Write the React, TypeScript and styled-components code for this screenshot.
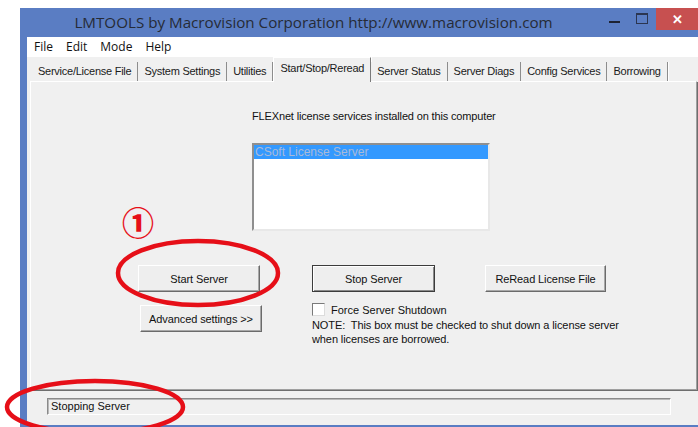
import styled, { createGlobalStyle } from "styled-components";

const GlobalStyle = createGlobalStyle`
    html, body {
        margin: 0;
        padding: 0;
        background: #ffffff;
    }
    body {
        font-family: "Liberation Sans", Arial, sans-serif;
        overflow: hidden;
    }
`

const Page = styled.div`
    position: relative;
    width: 698px;
    height: 427px;
    padding: 8px 0 0 20px;
    box-sizing: border-box;
    overflow: hidden;
`

const Window = styled.div`
    display: flex;
    flex-direction: column;
    width: 678px;
    height: 419px;
    background: #5a7dc3;
    padding: 0 0 2px 7px;
    box-sizing: border-box;
`

const TitleBar = styled.div`
    display: flex;
    align-items: flex-start;
    height: 29px;
    flex-shrink: 0;
`

const Title = styled.div`
    flex: 1;
    text-align: center;
    font-family: "Open Sans", "Noto Sans", sans-serif;
    font-size: 15.2px;
    line-height: 29px;
    color: #262b36;
`

const Controls = styled.div`
    display: flex;
    align-items: flex-start;
    width: 98px;
    height: 22px;
`

const CtrlButton = styled.div<{ close?: boolean }>`
    display: flex;
    align-items: center;
    justify-content: center;
    width: ${({ close }) => (close ? '42px' : '28px')};
    height: 22px;
    background: ${({ close }) => (close ? '#c75050' : 'transparent')};
    color: #ffffff;
    font-size: 13px;
    font-weight: bold;
`

const MinGlyph = styled.span`
    display: block;
    width: 11px;
    height: 2px;
    margin-top: 6px;
    background: #1d2333;
`

const MaxGlyph = styled.span`
    display: block;
    width: 10px;
    height: 8px;
    border: 1px solid #2b3550;
    border-top-width: 2px;
    margin-top: -2px;
`

const Client = styled.div`
    flex: 1;
    display: flex;
    flex-direction: column;
    background: #f0f0f0;
`

const MenuBar = styled.div`
    display: flex;
    gap: 13px;
    height: 20px;
    padding-left: 7px;
    background: #ffffff;
    font-family: "Open Sans", "Noto Sans", sans-serif;
    font-size: 12px;
    line-height: 20px;
    color: #111;
    flex-shrink: 0;
`

const TabStrip = styled.div`
    display: flex;
    align-items: flex-end;
    height: 21px;
    margin-top: 3px;
    padding-left: 5px;
    flex-shrink: 0;
    position: relative;
    z-index: 1;
`

const Tab = styled.div<{ active?: boolean }>`
    height: ${({ active }) => (active ? '24px' : '19px')};
    padding: 0 6px 0 6px;
    margin-bottom: ${({ active }) => (active ? '-1px' : '0')};
    font-size: 11px;
    letter-spacing: -0.25px;
    line-height: ${({ active }) => (active ? '20px' : '18px')};
    color: #1a1a1a;
    white-space: nowrap;
    background: #f0f0f0;
    border-right: 1px solid ${({ active }) => (active ? '#7a7a7a' : '#8d8d8d')};
    border-left: ${({ active }) => (active ? '1px solid #ffffff' : 'none')};
    border-top: ${({ active }) => (active ? '1px solid #ffffff' : 'none')};
    box-shadow: 1px 0 0 #ffffff;
`

const Panel = styled.div`
    display: flex;
    flex-direction: column;
    height: 309px;
    margin: 0 1px 0 3px;
    border: 1px solid;
    border-color: #ffffff #a0a0a0 #a0a0a0 #ffffff;
    box-shadow: 1px 1px 0 #6e6e6e;
    box-sizing: border-box;
    flex-shrink: 0;
`

const ServicesBlock = styled.div`
    padding: 27px 0 0 221px;
`

const Caption = styled.div`
    font-size: 11px;
    line-height: 14px;
    letter-spacing: -0.15px;
    color: #111;
`

const ListBox = styled.div`
    width: 238px;
    height: 88px;
    margin-top: 20px;
    background: #ffffff;
    border: 2px solid;
    border-color: #8f8f8f #e8e8e8 #e8e8e8 #8f8f8f;
    box-sizing: border-box;
`

const ListItem = styled.div<{ selected?: boolean }>`
    height: 14px;
    padding-left: 1px;
    font-size: 12px;
    line-height: 14px;
    color: ${({ selected }) => (selected ? '#a9bad8' : '#111')};
    background: ${({ selected }) => (selected ? '#3399ff' : 'transparent')};
`

const Controls2 = styled.div`
    padding: 34px 0 0 107px;
`

const ButtonRow = styled.div`
    display: flex;
    align-items: flex-start;
`

const Button = styled.div<{ w: number, gap?: number, isDefault?: boolean }>`
    display: flex;
    align-items: center;
    justify-content: center;
    width: ${({ w }) => w}px;
    height: 27px;
    margin-left: ${({ gap }) => gap || 0}px;
    background: #eeeeee;
    border: 1px solid;
    border-color: ${({ isDefault }) => (isDefault ? '#3c3c3c' : '#ffffff #6b6b6b #6b6b6b #ffffff')};
    box-shadow: ${({ isDefault }) => (isDefault
        ? 'inset 1px 1px 0 #ffffff, inset -1px -1px 0 #8a8a8a'
        : 'inset -1px -1px 0 #a8a8a8')};
    box-sizing: border-box;
    font-size: 11px;
    letter-spacing: -0.1px;
    color: #111;
    flex-shrink: 0;
`

const OptionsRow = styled.div`
    display: flex;
    align-items: flex-start;
    margin-top: 11px;
`

const AdvancedWrap = styled.div`
    margin: 2px 0 0 2px;
`

const OptionsColumn = styled.div`
    margin-left: 50px;
`

const CheckRow = styled.div`
    display: flex;
    align-items: center;
    gap: 6px;
    height: 13px;
    font-size: 11px;
    color: #111;
`

const CheckBox = styled.span`
    display: block;
    width: 13px;
    height: 13px;
    background: #ffffff;
    border: 1px solid;
    border-color: #7a7a7a #dcdcdc #dcdcdc #7a7a7a;
    box-sizing: border-box;
`

const Note = styled.div`
    margin-top: 2px;
    font-size: 11px;
    line-height: 14px;
    letter-spacing: -0.1px;
    color: #111;
    white-space: nowrap;
`

const StatusArea = styled.div`
    padding: 8px 0 0 20px;
    flex-shrink: 0;
`

const StatusBox = styled.div`
    width: 624px;
    height: 17px;
    padding-left: 3px;
    border: 1px solid;
    border-color: #8a8a8a #ffffff #ffffff #8a8a8a;
    box-shadow: inset 1px 1px 0 #b8b8b8;
    box-sizing: border-box;
    font-size: 11px;
    line-height: 15px;
    color: #111;
`

const Marks = styled.svg`
    position: absolute;
    left: 0;
    top: 0;
    pointer-events: none;
`

const StepNumber = styled.div`
    position: absolute;
    left: 122px;
    top: 203px;
    font-family: "Noto Sans CJK JP", "Noto Sans", sans-serif;
    font-size: 32px;
    font-weight: 900;
    line-height: 36px;
    color: #e60f18;
`

const tabs = [
    "Service/License File",
    "System Settings",
    "Utilities",
    "Start/Stop/Reread",
    "Server Status",
    "Server Diags",
    "Config Services",
    "Borrowing",
];

export default function App() {
    return (
        <>
            <GlobalStyle />
            <Page>
                <Window>
                    <TitleBar>
                        <Title>LMTOOLS by Macrovision Corporation http://www.macrovision.com</Title>
                        <Controls>
                            <CtrlButton><MinGlyph /></CtrlButton>
                            <CtrlButton><MaxGlyph /></CtrlButton>
                            <CtrlButton close>✕</CtrlButton>
                        </Controls>
                    </TitleBar>
                    <Client>
                        <MenuBar>
                            <span>File</span>
                            <span>Edit</span>
                            <span>Mode</span>
                            <span>Help</span>
                        </MenuBar>
                        <TabStrip>
                            {tabs.map((t) => (
                                <Tab key={t} active={t === "Start/Stop/Reread"}>{t}</Tab>
                            ))}
                        </TabStrip>
                        <Panel>
                            <ServicesBlock>
                                <Caption>FLEXnet license services installed on this computer</Caption>
                                <ListBox>
                                    <ListItem selected>CSoft License Server</ListItem>
                                </ListBox>
                            </ServicesBlock>
                            <Controls2>
                                <ButtonRow>
                                    <Button w={122}>Start Server</Button>
                                    <Button w={123} gap={52} isDefault>Stop Server</Button>
                                    <Button w={121} gap={50}>ReRead License File</Button>
                                </ButtonRow>
                                <OptionsRow>
                                    <AdvancedWrap>
                                        <Button w={122}>Advanced settings &gt;&gt;</Button>
                                    </AdvancedWrap>
                                    <OptionsColumn>
                                        <CheckRow>
                                            <CheckBox />
                                            <span>Force Server Shutdown</span>
                                        </CheckRow>
                                        <Note>
                                            NOTE:&nbsp; This box must be checked to shut down a license server
                                            <br />
                                            when licenses are borrowed.
                                        </Note>
                                    </OptionsColumn>
                                </OptionsRow>
                            </Controls2>
                        </Panel>
                        <StatusArea>
                            <StatusBox>Stopping Server</StatusBox>
                        </StatusArea>
                    </Client>
                </Window>
                <Marks width="698" height="427" viewBox="0 0 698 427">
                    <ellipse cx="198" cy="273" rx="80" ry="32" fill="none" stroke="#e60f18" strokeWidth="4.5" />
                    <ellipse cx="95" cy="407" rx="88" ry="26" fill="none" stroke="#e60f18" strokeWidth="4.5" />
                </Marks>
                <StepNumber>①</StepNumber>
            </Page>
        </>
    );
}
